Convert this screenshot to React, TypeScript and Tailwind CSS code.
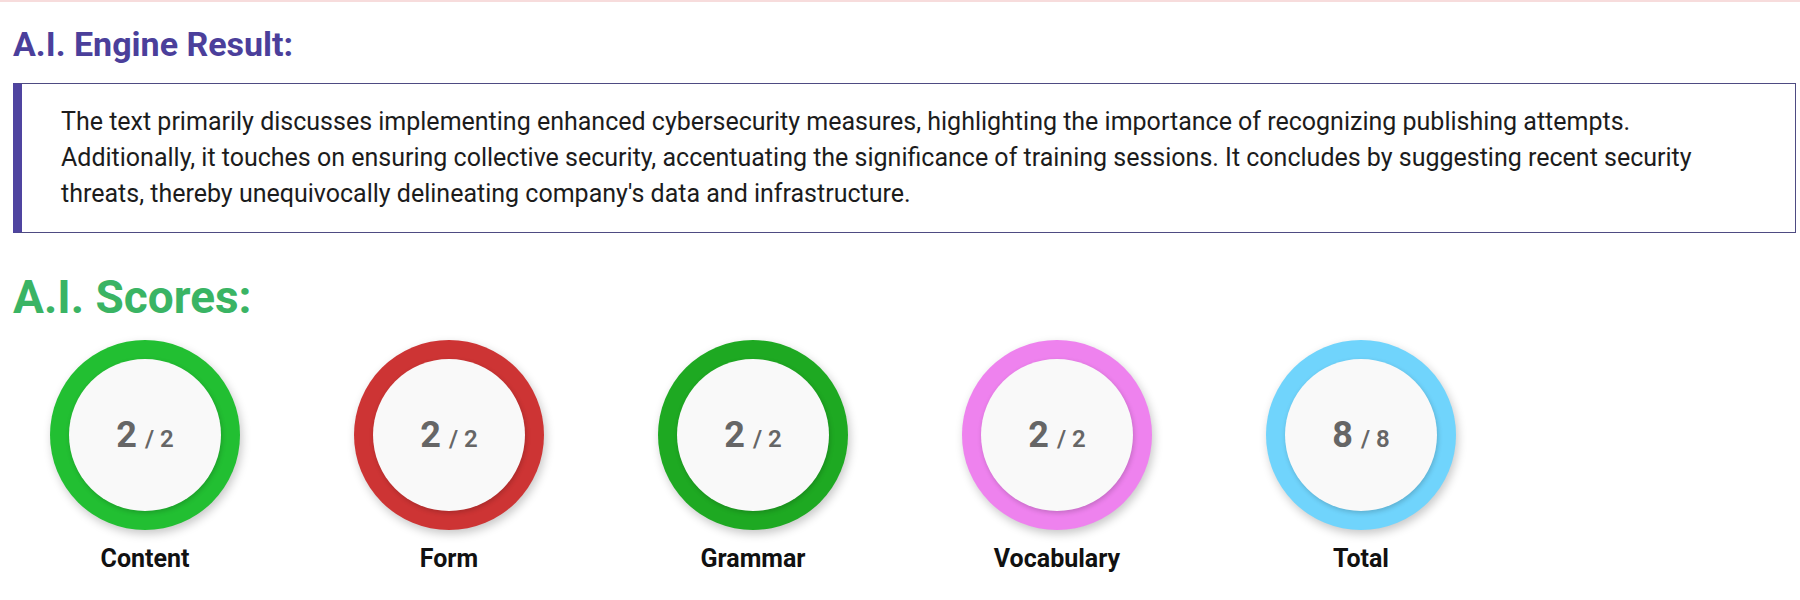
const scores = [
  { label: 'Content', value: 2, max: 2, ring: 'bg-[#22bf32]' },
  { label: 'Form', value: 2, max: 2, ring: 'bg-[#cd3434]' },
  { label: 'Grammar', value: 2, max: 2, ring: 'bg-[#1ea922]' },
  { label: 'Vocabulary', value: 2, max: 2, ring: 'bg-[#ee82ee]' },
  { label: 'Total', value: 8, max: 8, ring: 'bg-[#70d4fc]' },
]

function ScoreCircle({ label, value, max, ring }: { label: string; value: number; max: number; ring: string }) {
  return (
    <div className="flex w-[190px] flex-col items-center">
      <div className={`h-[190px] w-[190px] rounded-full p-[19px] shadow-[2px_4px_10px_rgba(0,0,0,0.22)] ${ring}`}>
        <div className="flex h-full w-full items-center justify-center rounded-full bg-[#f9f9f9] shadow-[1px_2px_5px_rgba(0,0,0,0.18)]">
          <div className="flex items-baseline text-[#666666]">
            <span className="text-[36px] font-bold leading-none">{value}</span>
            <span className="ml-[8px] text-[24px] font-semibold leading-none">/ {max}</span>
          </div>
        </div>
      </div>
      <div className="mt-[11px] text-[25px] font-bold leading-[36px] text-[#111111]">{label}</div>
    </div>
  )
}

export default function App() {
  return (
    <div className="min-h-screen border-t-2 border-[#f7dcdc] bg-white font-['Roboto',sans-serif]">
      <div className="pl-[13px] pr-[4px]">
        <h2 className="pt-[22px] text-[34px] font-bold leading-[1.2] text-[#4b3f9b]">A.I. Engine Result:</h2>

        <div className="mt-[18px] border border-l-[9px] border-[#4e4b82] border-l-[#4f44a0] py-5 pl-[39px] pr-[24px] text-[25px] leading-[36px] text-[#1c1c1c]">
          The text primarily discusses implementing enhanced cybersecurity measures, highlighting the importance of recognizing publishing attempts.
          <br />
          Additionally, it touches on ensuring collective security, accentuating the significance of training sessions. It concludes by suggesting recent security
          <br />
          threats, thereby unequivocally delineating company's data and infrastructure.
        </div>

        <h2 className="mt-[37px] text-[46px] font-bold leading-[1.2] text-[#3ab464]">A.I. Scores:</h2>

        <div className="mt-[15px] flex gap-[114px] pl-[37px]">
          {scores.map((s) => (
            <ScoreCircle key={s.label} {...s} />
          ))}
        </div>
      </div>
    </div>
  )
}
